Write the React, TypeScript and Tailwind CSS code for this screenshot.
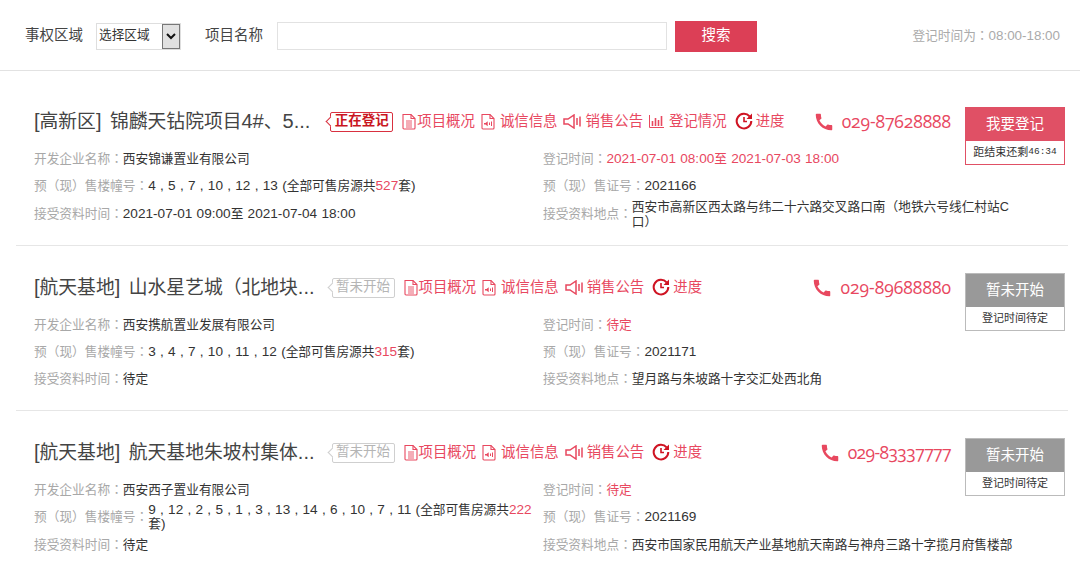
import { ReactNode } from 'react'
import { MdCall } from 'react-icons/md'

type Project = {
  title: string
  open: boolean
  showRegister: boolean
  phone: string
  phoneClass?: string
  company: string
  registerTime: string
  buildings: string
  total: string
  receiveTime: string
  permit: string
  place: string
}

const projects: Project[] = [
  {
    title: '[高新区] 锦麟天钻院项目4#、5...',
    open: true,
    showRegister: true,
    phone: '029-87628888',
    phoneClass: 'tracking-[-0.1px]',
    company: '西安锦谦置业有限公司',
    registerTime: '2021-07-01 08:00至 2021-07-03 18:00',
    buildings: '4 , 5 , 7 , 10 , 12 , 13',
    total: '527',
    receiveTime: '2021-07-01 09:00至 2021-07-04 18:00',
    permit: '2021166',
    place: '西安市高新区西太路与纬二十六路交叉路口南（地铁六号线仁村站C口）',
  },
  {
    title: '[航天基地] 山水星艺城（北地块...',
    open: false,
    showRegister: false,
    phone: '029-89688880',
    company: '西安携航置业发展有限公司',
    registerTime: '待定',
    buildings: '3 , 4 , 7 , 10 , 11 , 12',
    total: '315',
    receiveTime: '待定',
    permit: '2021171',
    place: '望月路与朱坡路十字交汇处西北角',
  },
  {
    title: '[航天基地] 航天基地朱坡村集体...',
    open: false,
    showRegister: false,
    phone: '029-83337777',
    phoneClass: 'tracking-[-0.6px]',
    company: '西安西子置业有限公司',
    registerTime: '待定',
    buildings: '9 , 12 , 2 , 5 , 1 , 3 , 13 , 14 , 6 , 10 , 7 , 11',
    total: '222',
    receiveTime: '待定',
    permit: '2021169',
    place: '西安市国家民用航天产业基地航天南路与神舟三路十字揽月府售楼部',
  },
]

// latin runs sit larger than the CJK ones here, and the brackets and colons are centred in their cell
function Mixed({ text, latinClass = '' }: { text: string; latinClass?: string }) {
  const parts = text.split(/([（）：]|[\u4e00-\u9fff、]+)/).filter(Boolean)
  return (
    <>
      {parts.map((part, i) => {
        if (/[（）：]/.test(part)) {
          return <span key={i} className="font-['Noto_Sans_CJK_TC',sans-serif]">{part}</span>
        }
        if (/[\u4e00-\u9fff、]/.test(part)) return part
        return <span key={i} className={latinClass}>{part}</span>
      })}
    </>
  )
}

function DocIcon() {
  return (
    <svg width="14" height="17" viewBox="0 0 14 17" fill="none" stroke="currentColor" strokeWidth="1.1" className="shrink-0">
      <path d="M1 1.5h8l4 4v9.5a1 1 0 0 1-1 1H2a1 1 0 0 1-1-1z" />
      <path d="M9 1.5v4h4" />
      <path d="M4 8h6M4 10h6M4 12h6M4 14h6" strokeWidth="0.9" />
    </svg>
  )
}

function SoundDocIcon() {
  return (
    <svg width="14" height="17" viewBox="0 0 14 17" fill="none" stroke="currentColor" strokeWidth="1.1" className="shrink-0">
      <path d="M1 1.5h8l4 4v9.5a1 1 0 0 1-1 1H2a1 1 0 0 1-1-1z" />
      <path d="M9 1.5v4h4" />
      <path d="M3 10h1.5l2.2-1.8v5L4.5 11.5H3z" fill="currentColor" stroke="none" />
      <path d="M8.5 9.5v2.5M10.5 8.5v4.5" strokeWidth="1" />
    </svg>
  )
}

function SpeakerIcon() {
  return (
    <svg width="18" height="15" viewBox="0 0 18 15" fill="none" stroke="currentColor" strokeWidth="1.5" className="shrink-0">
      <path d="M1 5h4l6-4v13l-6-4H1z" />
      <path d="M14 4v7M17 2.5v10" />
    </svg>
  )
}

function BarsIcon() {
  return (
    <svg width="15" height="14" viewBox="0 0 15 14" fill="none" stroke="currentColor" className="shrink-0">
      <path d="M.5 1v12.5H15" strokeWidth="1" />
      <path d="M3.5 7v5M6.5 4v8M9.5 6v6M12.5 2v10" strokeWidth="1.6" />
    </svg>
  )
}

function ProgressIcon() {
  return (
    <svg width="18" height="18" viewBox="0 0 18 18" fill="none" stroke="#cf1322" className="shrink-0">
      <path d="M14.6 4.4A7.3 7.3 0 1 0 16.3 9" strokeWidth="2" />
      <path d="M17 1.5v5.5h-5.5z" fill="#cf1322" stroke="none" />
      <path d="M9 5v4.5h3" strokeWidth="1.6" />
    </svg>
  )
}

function StatusTag({ open }: { open: boolean }) {
  const color = open ? 'ml-[20px] border-[#d9303f] text-[#c9151e] font-bold' : 'ml-[17px] border-[#cfcfcf] text-[#b5b5b5]'
  const notch = open ? 'border-[#d9303f]' : 'border-[#cfcfcf]'
  return (
    <span className={`relative flex h-[20px] w-[63px] shrink-0 items-center justify-center rounded-[2px] border bg-white text-[13.5px] whitespace-nowrap ${color}`}>
      <span className={`absolute left-[-4px] top-[5px] h-[7px] w-[7px] rotate-45 border-b border-l bg-white ${notch}`} />
      <span className="relative">{open ? '正在登记' : '暂未开始'}</span>
    </span>
  )
}

function InfoCell({ label, children, red }: { label: string; children: ReactNode; red?: boolean }) {
  return (
    <div className="flex min-h-[27px] items-center odd:pr-[7px]">
      <span className="shrink-0 text-[#a8a8a8]">
        <Mixed text={`${label}：`} />
      </span>
      <span className={`flex-1 leading-[14px] ${red ? 'text-[#e8485f]' : 'text-[#333]'}`}>{children}</span>
    </div>
  )
}

function ActionBox({ project }: { project: Project }) {
  if (project.open) {
    return (
      <div className="h-[58px] w-[100px] shrink-0 border border-[#e05065] bg-white">
        <div className="flex h-[33px] items-center justify-center bg-[#e05065] text-[14.5px] text-white">我要登记</div>
        <div className="flex h-[23px] items-center justify-center text-[11px] text-[#333]">
          距结束还剩<span className="font-['Liberation_Mono',monospace] text-[9.5px]">46:34</span>
        </div>
      </div>
    )
  }
  return (
    <div className="h-[58px] w-[100px] shrink-0 border border-[#bbb] bg-white">
      <div className="flex h-[33px] items-center justify-center bg-[#999] text-[14.5px] text-white">暂未开始</div>
      <div className="flex h-[23px] items-center justify-center text-[11px] text-[#333]">登记时间待定</div>
    </div>
  )
}

function ProjectRow({ project }: { project: Project }) {
  const latin = 'text-[13.6px] [word-spacing:0.5px]'
  return (
    <div className="ml-[16px] h-[165px] w-[1052px] border-b border-[#e6e6e6] pl-[18px] pr-[3px] pt-[27px] first:h-[166px]">
      <div className="flex items-start">
        <div className="flex h-[29px] flex-1 items-center">
          <span className="shrink-0 text-[18.8px] whitespace-nowrap text-[#444]">
            <Mixed text={project.title} latinClass="text-[20px] [word-spacing:3px]" />
          </span>
          <StatusTag open={project.open} />
          <div className="ml-[9px] flex items-center text-[14.4px] text-[#e8485f]">
            <span className="flex items-center gap-[1px] whitespace-nowrap"><DocIcon />项目概况</span>
            <span className="ml-[6px] flex items-center gap-[5px] whitespace-nowrap"><SoundDocIcon />诚信信息</span>
            <span className="ml-[6px] flex items-center gap-[4px] whitespace-nowrap"><SpeakerIcon />销售公告</span>
            {project.showRegister && (
              <span className="ml-[6px] flex items-center gap-[5px] whitespace-nowrap"><BarsIcon />登记情况</span>
            )}
            <span className="ml-[8px] flex items-center gap-[3px] whitespace-nowrap"><ProgressIcon />进度</span>
          </div>
          <div className="ml-auto mr-[14px] flex items-center gap-[7px] text-[#e8485f]">
            <MdCall size={22} />
            <span className={`font-['Open_Sans',sans-serif] text-[17.5px] [font-variant-numeric:oldstyle-nums] ${project.phoneClass ?? ''}`}>{project.phone}</span>
          </div>
        </div>
        <ActionBox project={project} />
      </div>
      <div className="-mt-[20px] grid grid-cols-[509px_472px] text-[12.7px]">
        <InfoCell label="开发企业名称">{project.company}</InfoCell>
        <InfoCell label="登记时间" red><Mixed text={project.registerTime} latinClass={latin} /></InfoCell>
        <InfoCell label="预（现）售楼幢号">
          <span className={latin}>{project.buildings} (</span>全部可售房源共
          <span className={`text-[#e8485f] ${latin}`}>{project.total}</span>套<span className={latin}>)</span>
        </InfoCell>
        <InfoCell label="预（现）售证号"><span className={latin}>{project.permit}</span></InfoCell>
        <InfoCell label="接受资料时间"><Mixed text={project.receiveTime} latinClass={latin} /></InfoCell>
        <InfoCell label="接受资料地点"><Mixed text={project.place} /></InfoCell>
      </div>
    </div>
  )
}

export default function App() {
  return (
    <div className="h-[565px] w-[1080px] overflow-hidden bg-white font-['Liberation_Sans','Noto_Sans_CJK_SC',sans-serif] [text-spacing-trim:space-all]">
      <header className="flex h-[71px] items-center border-b border-[#e2e2e2] pt-[2px] pl-[25px] pr-[20px] text-[14.5px] text-[#444]">
        <span>事权区域</span>
        <div className="relative ml-[13px] h-[27px] w-[85px] border border-[#dedede]">
          <select className="h-full w-full appearance-none pl-[2px] text-[12.7px] text-[#333]" defaultValue="选择区域">
            <option>选择区域</option>
          </select>
          <span className="pointer-events-none absolute right-0 top-0 flex h-full w-[18px] items-center justify-center border border-[#777] bg-[#e1e1e1]">
            <svg width="10" height="7" viewBox="0 0 10 7" fill="none" stroke="#111" strokeWidth="2">
              <path d="M1 1l4 4 4-4" />
            </svg>
          </span>
        </div>
        <span className="ml-[24px]">项目名称</span>
        <input className="ml-[14px] h-[28px] w-[390px] border border-[#e2e2e2] bg-white" />
        <button className="ml-[8px] h-[31px] w-[82px] bg-[#dc3f56] text-white">搜索</button>
        <span className="ml-auto text-[12.7px] text-[#aaa]">
          登记时间为<span className="font-['Noto_Sans_CJK_TC',sans-serif]">：</span>
          <span className="text-[13.4px]">08:00-18:00</span>
        </span>
      </header>
      <div className="pt-[9px]">
        {projects.map((project) => (
          <ProjectRow key={project.permit} project={project} />
        ))}
      </div>
    </div>
  )
}
